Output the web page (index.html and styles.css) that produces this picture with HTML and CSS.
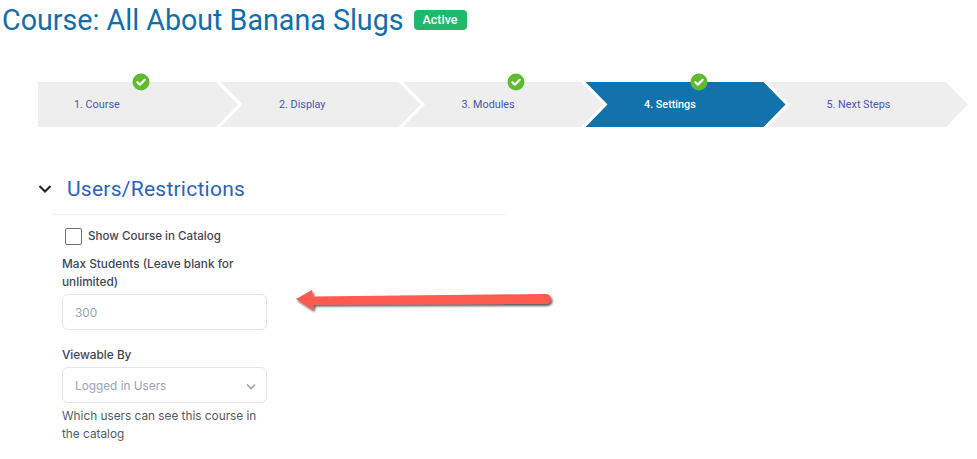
FILE: index.html
```html
<!DOCTYPE html>
<html lang="en">
<head>
<meta charset="UTF-8">
<meta name="viewport" content="width=device-width, initial-scale=1.0">
<title>Course: All About Banana Slugs</title>
<link rel="stylesheet" href="styles.css">
</head>
<body>
<header class="courseHeader">
  <h1>Course: All About Banana Slugs</h1>
  <span class="statusBadge">Active</span>
</header>

<ol class="steps">
  <li class="step stepFirst">1. Course
    <svg class="stepCheck checkFirst" viewBox="0 0 18 18"><circle cx="9" cy="9" r="8.5" fill="#5fbb2f"/><path d="M5.4 9.2l2.5 2.4 4.8-4.8" fill="none" stroke="#fff" stroke-width="2.2" stroke-linecap="round" stroke-linejoin="round"/></svg>
  </li>
  <li class="step">2. Display</li>
  <li class="step">3. Modules
    <svg class="stepCheck checkThird" viewBox="0 0 18 18"><circle cx="9" cy="9" r="8.5" fill="#5fbb2f"/><path d="M5.4 9.2l2.5 2.4 4.8-4.8" fill="none" stroke="#fff" stroke-width="2.2" stroke-linecap="round" stroke-linejoin="round"/></svg>
  </li>
  <li class="step stepActive">4. Settings
    <svg class="stepCheck checkFourth" viewBox="0 0 18 18"><circle cx="9" cy="9" r="8.5" fill="#5fbb2f"/><path d="M5.4 9.2l2.5 2.4 4.8-4.8" fill="none" stroke="#fff" stroke-width="2.2" stroke-linecap="round" stroke-linejoin="round"/></svg>
  </li>
  <li class="step">5. Next Steps</li>
</ol>

<section class="panel">
  <div class="panelTitle">
    <svg class="chevron" viewBox="0 0 14 10"><path d="M1.5 2l5.500 5.500L12.500 2" fill="none" stroke="#222" stroke-width="2"/></svg>
    <h2>Users/Restrictions</h2>
  </div>
  <div class="panelBody">
    <label class="checkRow"><span class="checkBox"></span>Show Course in Catalog</label>
    <label class="fieldLabel">Max Students (Leave blank for unlimited)</label>
    <div class="field">300</div>
    <label class="fieldLabel viewLabel">Viewable By</label>
    <div class="field">Logged in Users
      <svg class="selectArrow" viewBox="0 0 10 7"><path d="M1 1.500l4 4 4-4" fill="none" stroke="#9ca3af" stroke-width="1.6"/></svg>
    </div>
    <p class="hint">Which users can see this course in the catalog</p>
  </div>
</section>

<svg class="callout" viewBox="0 0 270 40">
  <defs>
    <filter id="arrowShadow" x="-5%" y="-50%" width="110%" height="200%">
      <feDropShadow dx="1.500" dy="2" stdDeviation="1.200" flood-color="#000" flood-opacity="0.65"/>
    </filter>
  </defs>
  <path filter="url(#arrowShadow)" fill="#ff5a4f" d="M3 17L19 8l1 6.500L253 12a5 5 0 0 1 0 10L21 22.500l-1 5.500z"/>
</svg>
</body>
</html>
```
FILE: styles.css
```css
html, body, header, section, div, h1, h2, p, ol, li, label {
  margin: 0;
  padding: 0;
  box-sizing: border-box;
}

body {
  background-color: #fff;
  width: 977px;
  height: 459px;
  overflow: hidden;
  position: relative;
  font-family: "Inter", "Liberation Sans", sans-serif;
}

.courseHeader {
  display: flex;
  align-items: center;
  gap: 10px;
  height: 40px;
  padding-left: 2px;
}

.courseHeader h1 {
  font-family: "Roboto", sans-serif;
  font-weight: 400;
  font-size: 28.65px;
  color: #136ea8;
}

.statusBadge {
  background-color: #1fb96b;
  color: #fff;
  font-family: "Roboto", sans-serif;
  font-size: 12.5px;
  font-weight: 500;
  line-height: 20px;
  padding: 0 9px;
  border-radius: 4px;
}

.steps {
  list-style: none;
  display: flex;
  margin: 42px 0 0 38px;
  position: relative;
  z-index: 0;
}

.step {
  position: relative;
  flex: none;
  width: 200px;
  height: 45px;
  margin-left: -17.5px;
  padding-left: 58.5px;
  line-height: 45px;
  font-family: "Roboto", sans-serif;
  font-size: 10.8px;
  color: #4a55b0;
}

/* chevron lives on ::before so the clip does not cut off the check badge */
.step::before {
  content: "";
  position: absolute;
  inset: 0;
  z-index: -1;
  background-color: #eee;
  clip-path: polygon(0 0, 178px 0, 100% 50%, 178px 100%, 0 100%, 22px 50%);
}

.stepFirst {
  margin-left: 0;
  padding-left: 36px;
}

.stepFirst::before {
  clip-path: polygon(0 0, 178px 0, 100% 50%, 178px 100%, 0 100%);
}

.stepActive {
  color: #fff;
  font-weight: 500;
}

.stepActive::before {
  background-color: #1272ab;
}

.stepCheck {
  position: absolute;
  top: -9px;
  width: 18px;
  height: 18px;
}

.checkFirst { left: 94px; }
.checkThird { left: 104px; }
.checkFourth { left: 104px; }

.panel {
  width: 505px;
  margin-top: 47px;
  padding-left: 38px;
}

.panelTitle {
  display: flex;
  align-items: center;
  gap: 15px;
  height: 30px;
}

.chevron {
  width: 14px;
  height: 10px;
}

.panelTitle h2 {
  font-family: "Roboto", sans-serif;
  font-weight: 400;
  font-size: 21px;
  letter-spacing: 0.25px;
  color: #2a63b8;
}

.panelBody {
  margin: 10px 0 0 14px;
  padding: 12px 0 0 10px;
  border-top: 1px solid #eeeef0;
  color: #3f4653;
  font-size: 11.8px;
}

.checkRow {
  display: flex;
  align-items: center;
  gap: 8px;
  height: 18px;
  margin-left: 3px;
  font-size: 11.6px;
  font-weight: 500;
}

.checkBox {
  width: 15px;
  height: 15px;
  margin-right: -2px;
  border: 1px solid #6b6f78;
  border-radius: 2px;
}

.fieldLabel {
  display: block;
  width: 205px;
  margin-top: 10px;
  font-weight: 500;
  line-height: 18px;
}

.field {
  position: relative;
  width: 205px;
  height: 36px;
  margin-top: 3px;
  padding-left: 12px;
  line-height: 36px;
  border: 1px solid #e3e5ea;
  border-radius: 6px;
  color: #9ca3af;
}

.viewLabel {
  margin-top: 16px;
}

.selectArrow {
  position: absolute;
  top: 15px;
  right: 10px;
  width: 10px;
  height: 7px;
}

.hint {
  width: 205px;
  margin-top: 4px;
  line-height: 18px;
  color: #555b66;
}

.callout {
  position: absolute;
  left: 293px;
  top: 282px;
  width: 270px;
  height: 40px;
}
```
